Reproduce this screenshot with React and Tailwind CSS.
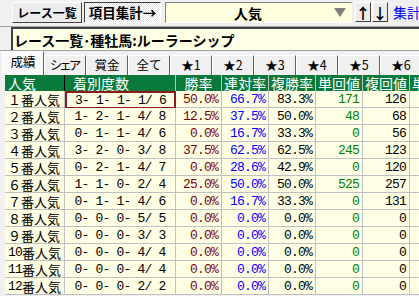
import React from "react";

const jp = { fontFamily: '"Noto Sans CJK JP", "Liberation Sans", sans-serif' };
const mono = { fontFamily: '"Liberation Mono", "Noto Sans CJK JP", monospace' };

const z = ["0.0%", "0.0%", "0.0%", "0", "0"];
const rows = [
  ["１番人気", "3- 1- 1- 1/ 6", "50.0%", "66.7%", "83.3%", "171", "126"],
  ["２番人気", "1- 2- 1- 4/ 8", "12.5%", "37.5%", "50.0%", "48", "68"],
  ["３番人気", "0- 1- 1- 4/ 6", "0.0%", "16.7%", "33.3%", "0", "56"],
  ["４番人気", "3- 2- 0- 3/ 8", "37.5%", "62.5%", "62.5%", "245", "123"],
  ["５番人気", "0- 2- 1- 4/ 7", "0.0%", "28.6%", "42.9%", "0", "120"],
  ["６番人気", "1- 1- 0- 2/ 4", "25.0%", "50.0%", "50.0%", "525", "257"],
  ["７番人気", "0- 1- 1- 4/ 6", "0.0%", "16.7%", "33.3%", "0", "131"],
  ["８番人気", "0- 0- 0- 5/ 5", ...z],
  ["９番人気", "0- 0- 0- 3/ 3", ...z],
  ["10番人気", "0- 0- 0- 4/ 4", ...z],
  ["11番人気", "0- 0- 0- 4/ 4", ...z],
  ["12番人気", "0- 0- 0- 2/ 2", ...z],
];

const tabs = ["成績", "シェア", "賞金", "全て", "★1", "★2", "★3", "★4", "★5", "★6"];

// colour for the numeric columns
const numColor = ["text-[#800000]", "text-[#0000ff]", "text-black", "text-[#008000]", "text-black"];

const gridCols = "grid grid-cols-[60px_111px_46px_47px_47px_47px_47px_60px]";
const raised = "bg-[#ececec] border border-t-white border-l-white border-b-[#404040] border-r-[#404040]";

const App = () => {
  return (
    <div className="w-[419px] h-[296px] overflow-hidden bg-[#f0f0f0] text-black" style={jp}>
      {/* top toolbar */}
      <div className="h-[24px] flex items-start pt-[2px] pl-[12px] gap-[2px] whitespace-nowrap">
        <button className={`${raised} shrink-0 h-[21px] w-[70px] text-[12px] font-bold leading-none flex items-center justify-center`}>
          レース一覧
        </button>
        <button className="shrink-0 h-[21px] w-[77px] border border-t-[#404040] border-l-[#404040] border-b-white border-r-white text-[13.5px] font-bold leading-none flex items-center justify-center bg-[repeating-conic-gradient(#ffffff_0_25%,#e4e4e4_0_50%)] bg-[length:2px_2px]">
          項目集計→
        </button>
        <div className="shrink-0 ml-[2px] h-[21px] w-[187px] bg-[#ffffe0] border border-t-[#808080] border-l-[#808080] border-b-white border-r-white flex items-center">
          <span className="flex-1 text-center text-[14px] font-bold leading-none pr-[4px]">人気</span>
          <svg width="12" height="9" viewBox="0 0 12 9" className="mr-[5px]">
            <polygon points="0,0 12,0 6,9" fill="#808080" />
          </svg>
        </div>
        <button className={`${raised} shrink-0 ml-[1px] h-[20px] w-[16px] text-[15px] font-bold leading-none flex items-center justify-center`}>
          ↑
        </button>
        <button className={`${raised} shrink-0 -ml-[1px] h-[20px] w-[16px] text-[15px] font-bold leading-none flex items-center justify-center`}>
          ↓
        </button>
        <span className="shrink-0 ml-[3px] mt-[3px] text-[14px] leading-none text-[#0000ff]">集計表示</span>
      </div>

      {/* title row */}
      <div className="mt-[2px] h-[24px] border-t border-[#a0a0a0] pl-[11px]">
        <div className="h-[23px] bg-[#ffffe6] border-t-2 border-l-2 border-t-[#404040] border-l-[#404040] flex items-center pl-[1px] whitespace-nowrap">
          <span className="text-[14px] font-bold leading-none">レース一覧･種牡馬:ルーラーシップ</span>
        </div>
      </div>

      <div className="flex h-[245px] border-t border-[#a0a0a0]">
        <div className="w-[4px] bg-[#c8d7ec]" />
        <div className="flex-1 flex flex-col pl-[2px]">
          {/* tabs */}
          <div className="h-[25px] flex items-end whitespace-nowrap">
            {tabs.map((t, i) => (
              <div
                key={t}
                className={`${
                  i === 0 ? "h-[24px] bg-[#fafafa] pb-[2px]" : "h-[20px] bg-[#f0f0f0]"
                } w-[42px] shrink-0 border-t border-l border-r border-t-white border-l-white border-r-[#606060] text-[12.5px] leading-none flex items-center justify-center ${
                  t === "シェア" ? "tracking-[-3px] pr-[2px]" : ""
                }`}
              >
                {t}
              </div>
            ))}
          </div>

          {/* table */}
          <div className="pl-[3px]">
            <div className={`${gridCols} h-[16px] bg-[#0a7a3c] text-white text-[14px] leading-none whitespace-nowrap`}>
              <div className="border-r border-black pl-[3px] flex items-center">人気</div>
              <div className="border-r border-[#c0c0c0] pl-[8px] flex items-center">着別度数</div>
              <div className="border-r border-[#c0c0c0] flex items-center justify-center">勝率</div>
              <div className="border-r border-[#c0c0c0] pl-[2px] flex items-center">連対率</div>
              <div className="border-r border-[#c0c0c0] pl-[2px] flex items-center">複勝率</div>
              <div className="border-r border-[#c0c0c0] pl-[2px] flex items-center">単回値</div>
              <div className="border-r border-[#c0c0c0] pl-[2px] flex items-center">複回値</div>
              <div className="pl-[2px] flex items-center overflow-hidden">単勝</div>
            </div>
            {rows.map((r, i) => (
              <div key={i} className={`${gridCols} h-[17px] bg-[#ffffe6] leading-none whitespace-nowrap`}>
                <div className="border-r border-b border-[#c0c0c0] pl-[3px] flex items-center text-[13px] overflow-hidden">
                  {/^[0-9]/.test(r[0]) ? (
                    <>
                      <span className="tracking-[-0.8px]" style={mono}>{r[0].slice(0, 2)}</span>
                      <span>{r[0].slice(2)}</span>
                    </>
                  ) : (
                    r[0]
                  )}
                </div>
                <div
                  className={`border-b flex items-center justify-center text-[13px] tracking-[-0.8px] whitespace-pre ${
                    i === 0 ? "border-2 border-[#8b1a1a]" : "border-r border-[#c0c0c0]"
                  }`}
                  style={mono}
                >
                  {r[1]}
                </div>
                {r.slice(2).map((v, k) => (
                  <div
                    key={k}
                    className={`border-r border-b border-[#c0c0c0] flex items-center justify-end pr-[3px] text-[13px] tracking-[-0.8px] ${numColor[k]}`}
                    style={mono}
                  >
                    {v}
                  </div>
                ))}
                <div className="border-b border-[#c0c0c0]" />
              </div>
            ))}
          </div>
        </div>
      </div>
    </div>
  );
};

export default App;
